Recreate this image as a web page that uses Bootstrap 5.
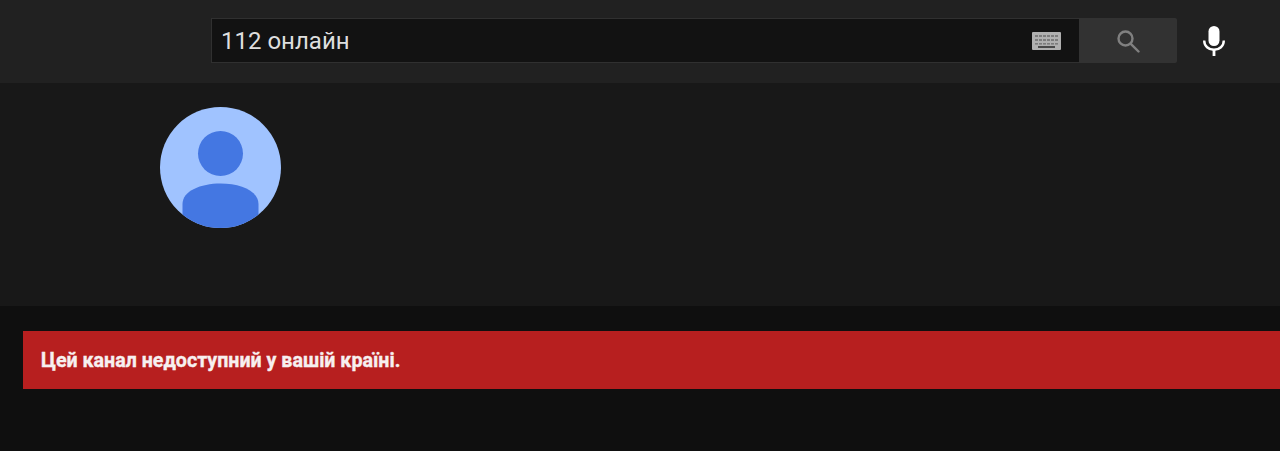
<!DOCTYPE html>
<html lang="uk">
<head>
  <meta charset="UTF-8">
  <meta name="viewport" content="width=device-width,initial-scale=1">
  <title>112 онлайн</title>
  <link href="https://cdn.jsdelivr.net/npm/bootstrap@5.3.3/dist/css/bootstrap.min.css" rel="stylesheet">
  <style>
    html, body { height: 100%; }
    body { background: #0f0f0f; font-family: Roboto, "Liberation Sans", sans-serif; overflow: hidden; }
    .topbar { height: 83px; background: #212121; padding-left: 211px; }
    .search-box { width: 868px; height: 45px; background: #121212; border: 1px solid #303030; border-right: 0; padding: 0 18px 0 9px; margin-top: 18px; }
    .search-text { font-size: 24px; color: #dedede; line-height: 1; }
    .search-btn { width: 98px; height: 45px; background: #323232; margin-top: 18px; border-radius: 0 2px 2px 0; }
    .mic-btn { width: 74px; margin-top: 18px; height: 45px; }
    .channel-head { height: 223px; background: #181818; padding: 24px 0 0 160px; }
    .avatar-pic { width: 121px; height: 121px; display: block; }
    .main-area { padding: 25px 0 0 23px; }
    .blocked-msg { height: 58px; background: #b71f1f; color: #f7f0f0; font-size: 19.65px; font-weight: 700; -webkit-text-stroke: .35px #f7f0f0; padding: 1px 0 0 18px; }
  </style>
</head>
<body>
<header class="topbar d-flex align-items-start">
  <div class="search-box d-flex align-items-center justify-content-between">
    <span class="search-text">112 онлайн</span>
    <svg width="29" height="18" viewBox="0 0 29 18">
      <rect width="29" height="18" rx="1" fill="#b0b0b0"/>
      <g fill="#7c7c7c">
        <rect x="3" y="3" width="23" height="2"/>
        <rect x="3" y="7" width="23" height="2"/>
        <rect x="3" y="11" width="23" height="1.6"/>
      </g>
      <g fill="#b0b0b0">
        <rect x="6" y="3" width="1" height="10"/>
        <rect x="10" y="3" width="1" height="10"/>
        <rect x="14" y="3" width="1" height="10"/>
        <rect x="18" y="3" width="1" height="10"/>
        <rect x="22" y="3" width="1" height="10"/>
      </g>
      <rect x="6" y="14" width="17" height="2" fill="#4a4a4a"/>
    </svg>
  </div>
  <div class="search-btn d-flex align-items-center justify-content-center">
    <svg width="24" height="24" viewBox="0 0 24 24" fill="none" stroke="#808080" stroke-width="2.4">
      <circle cx="9.500" cy="9.500" r="7"/>
      <path d="M14.800 14.800 22.500 22.500" stroke-linecap="round"/>
    </svg>
  </div>
  <div class="mic-btn d-flex align-items-center justify-content-center">
    <svg width="22" height="30" viewBox="0 0 22 30" fill="none">
      <rect x="5.500" y="0" width="11" height="20" rx="5.500" fill="#fff"/>
      <path d="M1.200 14.500c0 5.600 4.400 9.300 9.800 9.300s9.800-3.700 9.800-9.300" stroke="#fff" stroke-width="2.400"/>
      <rect x="9.600" y="23" width="2.800" height="7" fill="#fff"/>
    </svg>
  </div>
</header>
<section class="channel-head">
  <svg class="avatar-pic" viewBox="0 0 121 121">
    <defs><clipPath id="avatarClip"><circle cx="60.500" cy="60.500" r="60.500"/></clipPath></defs>
    <circle cx="60.500" cy="60.500" r="60.500" fill="#a0c3ff"/>
    <circle cx="60.500" cy="46.500" r="22.500" fill="#4477e2"/>
    <path clip-path="url(#avatarClip)" d="M22.500 121V97c0-13 18-20.500 38-20.500s38 7.500 38 20.500v24z" fill="#4477e2"/>
  </svg>
</section>
<main class="main-area">
  <div class="blocked-msg d-flex align-items-center">Цей канал недоступний у вашій країні.</div>
</main>
</body>
</html>
